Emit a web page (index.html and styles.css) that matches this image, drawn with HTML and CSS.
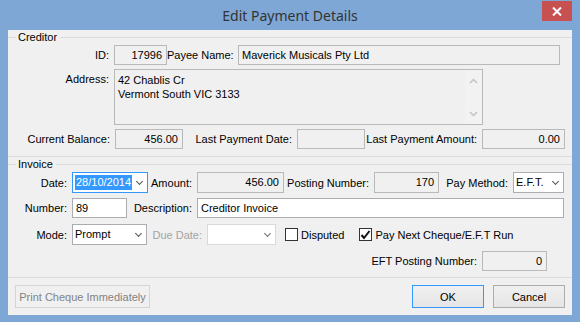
FILE: index.html
```html
<!DOCTYPE html>
<html lang="en">
<head>
    <meta charset="UTF-8">
    <title>Edit Payment Details</title>
    <link rel="stylesheet" href="styles.css">
</head>
<body>
    <div class="window">
        <div class="titlebar">
            <span></span>
            <span class="title">Edit Payment Details</span>
            <span class="close-btn">
                <svg width="10" height="9" viewBox="0 0 10 9"><path d="M1 0.5 L9 8.5 M9 0.5 L1 8.5" stroke="#fff" stroke-width="2"/></svg>
            </span>
        </div>
        <div class="client">
            <div class="group">
                <div class="group-head"><span class="group-line short"></span><span class="group-title">Creditor</span><span class="group-line"></span></div>
                <div class="row">
                    <label class="lbl" style="width:106px">ID:</label>
                    <div class="box ro num" style="width:53px">17996</div>
                    <label class="lbl" style="width:71px">Payee Name:</label>
                    <div class="box ro" style="width:322px">Maverick Musicals Pty Ltd</div>
                </div>
                <div class="row row-top gap4">
                    <label class="lbl lbl-top" style="width:106px">Address:</label>
                    <div class="memo">
                        <div class="memo-text">42 Chablis Cr<br>Vermont South VIC 3133</div>
                        <div class="scroll">
                            <svg width="9" height="6" viewBox="0 0 9 6"><path d="M1 5 L4.5 1.5 L8 5" fill="none" stroke="#c2c2c2" stroke-width="1.5"/></svg>
                            <svg width="9" height="6" viewBox="0 0 9 6"><path d="M1 1 L4.5 4.5 L8 1" fill="none" stroke="#c2c2c2" stroke-width="1.5"/></svg>
                        </div>
                    </div>
                </div>
                <div class="row gap4">
                    <label class="lbl" style="width:107px">Current Balance:</label>
                    <div class="box ro num" style="width:68px">456.00</div>
                    <label class="lbl" style="width:114px">Last Payment Date:</label>
                    <div class="box ro" style="width:68px"></div>
                    <label class="lbl" style="width:117px">Last Payment Amount:</label>
                    <div class="box ro num" style="width:83px">0.00</div>
                </div>
            </div>
            <div class="group group-invoice">
                <div class="group-head"><span class="group-line short"></span><span class="group-title">Invoice</span><span class="group-line"></span></div>
                <div class="row tall">
                    <label class="lbl" style="width:64px">Date:</label>
                    <div class="box combo focus" style="width:76px"><span class="sel">28/10/2014</span><span class="chev"></span></div>
                    <label class="lbl" style="width:49px">Amount:</label>
                    <div class="box ro num" style="width:87px">456.00</div>
                    <label class="lbl" style="width:90px">Posting Number:</label>
                    <div class="box ro num" style="width:65px">170</div>
                    <label class="lbl" style="width:74px">Pay Method:</label>
                    <div class="box combo" style="width:51px"><span>E.F.T.</span><span class="chev"></span></div>
                </div>
                <div class="row gap5">
                    <label class="lbl" style="width:64px">Number:</label>
                    <div class="box" style="width:55px">89</div>
                    <label class="lbl" style="width:70px">Description:</label>
                    <div class="box" style="width:367px">Creditor Invoice</div>
                </div>
                <div class="row tall gap6">
                    <label class="lbl" style="width:64px">Mode:</label>
                    <div class="box combo" style="width:75px"><span>Prompt</span><span class="chev"></span></div>
                    <label class="lbl disabled" style="width:60px">Due Date:</label>
                    <div class="box combo off" style="width:69px"><span></span><span class="chev"></span></div>
                    <label class="check" style="margin-left:9px"><span class="cbox"></span>Disputed</label>
                    <label class="check" style="margin-left:15px"><span class="cbox"><svg width="11" height="10" viewBox="0 0 11 10"><path d="M1.5 5 L4 8 L9.5 1" fill="none" stroke="#111" stroke-width="2"/></svg></span>Pay Next Cheque/E.F.T Run</label>
                </div>
                <div class="row gap6">
                    <label class="lbl" style="width:474px">EFT Posting Number:</label>
                    <div class="box ro num" style="width:65px">0</div>
                </div>
            </div>
            <div class="footer">
                <button class="btn" disabled>Print Cheque Immediately</button>
                <span class="spacer"></span>
                <button class="btn btn-default">OK</button>
                <button class="btn">Cancel</button>
            </div>
        </div>
    </div>
</body>
</html>
```
FILE: styles.css
```css
body {
    margin: 0;
    font-family: "Liberation Sans", Arial, sans-serif;
    font-size: 11px;
    color: #000;
    background: #7fa7d5;
}
.window {
    width: 580px;
    height: 322px;
    box-sizing: border-box;
    padding: 0 8px 7px 8px;
    background: #7fa7d5;
}
.titlebar {
    height: 30px;
    display: grid;
    grid-template-columns: 1fr auto 1fr;
}
.title {
    font-family: "Noto Sans", sans-serif;
    font-size: 14px;
    color: #333;
    line-height: 32px;
}
.close-btn {
    justify-self: end;
    margin-top: 1px;
    width: 30px;
    height: 20px;
    background: #c75050;
    display: flex;
    align-items: center;
    justify-content: center;
}
.client {
    height: 285px;
    background: #f0f0f0;
    display: flex;
    flex-direction: column;
}
.group {
    padding-bottom: 7px;
    border-bottom: 1px solid #dadada;
}
.group-invoice {
    padding-bottom: 6px;
}
.group-head {
    display: flex;
    align-items: center;
    height: 13px;
    margin-top: 1px;
}
.group-title {
    padding: 0 3px 0 2px;
    line-height: 13px;
}
.group-line {
    flex: 1;
    border-top: 1px solid #dadada;
}
.group-line.short {
    flex: 0 0 8px;
}
.row {
    display: flex;
    align-items: center;
    margin-top: 1px;
}
.row-top {
    align-items: flex-start;
}
.gap4 { margin-top: 4px; }
.gap5 { margin-top: 5px; }
.gap6 { margin-top: 6px; }
.lbl {
    box-sizing: border-box;
    text-align: right;
    padding-right: 5px;
    white-space: nowrap;
}
.lbl-top {
    padding-top: 4px;
}
.disabled {
    color: #a3a3a3;
}
.box {
    box-sizing: border-box;
    height: 20px;
    line-height: 18px;
    padding: 0 4px 0 3px;
    border: 1px solid #abadb3;
    background: #fff;
    white-space: nowrap;
    overflow: hidden;
}
.tall .box {
    height: 21px;
    line-height: 19px;
}
.ro {
    background: #f0f0f0;
    border-color: #b9b9b9;
}
.num {
    text-align: right;
}
.combo {
    display: flex;
    align-items: center;
    justify-content: space-between;
    padding: 0 5px 0 2px;
}
.focus {
    border-color: #3399ff;
}
.off {
    border-color: #d9d9d9;
}
.sel {
    background: #3399ff;
    color: #fff;
    line-height: 15px;
    padding: 0 1px;
}
.chev {
    width: 4px;
    height: 4px;
    border-right: 1.5px solid #555;
    border-bottom: 1.5px solid #555;
    transform: rotate(45deg);
    margin-top: -3px;
}
.off .chev {
    border-color: #6d6d6d;
}
.memo {
    box-sizing: border-box;
    width: 369px;
    height: 56px;
    border: 1px solid #b9b9b9;
    background: #f0f0f0;
    display: flex;
}
.memo-text {
    flex: 1;
    padding: 3px 3px;
    line-height: 14px;
}
.scroll {
    width: 17px;
    display: flex;
    flex-direction: column;
    justify-content: space-between;
    align-items: center;
    padding: 8px 0 7px;
    background: #f2f2f2;
}
.check {
    display: flex;
    align-items: center;
    white-space: nowrap;
}
.cbox {
    box-sizing: border-box;
    width: 13px;
    height: 13px;
    border: 1px solid #333;
    background: #fff;
    margin-right: 3px;
    display: flex;
    align-items: center;
    justify-content: center;
}
.footer {
    display: flex;
    gap: 9px;
    padding: 7px 7px 0 7px;
}
.spacer {
    flex: 1;
}
.btn {
    height: 23px;
    width: 72px;
    font: inherit;
    border: 1px solid #acacac;
    background: linear-gradient(#f0f0f0, #e5e5e5);
    color: #000;
    padding: 0;
}
.btn:disabled {
    width: 135px;
    color: #838383;
    border-color: #d5d5d5;
    background: #f0f0f0;
}
.btn-default {
    border-color: #3399ff;
}
```
